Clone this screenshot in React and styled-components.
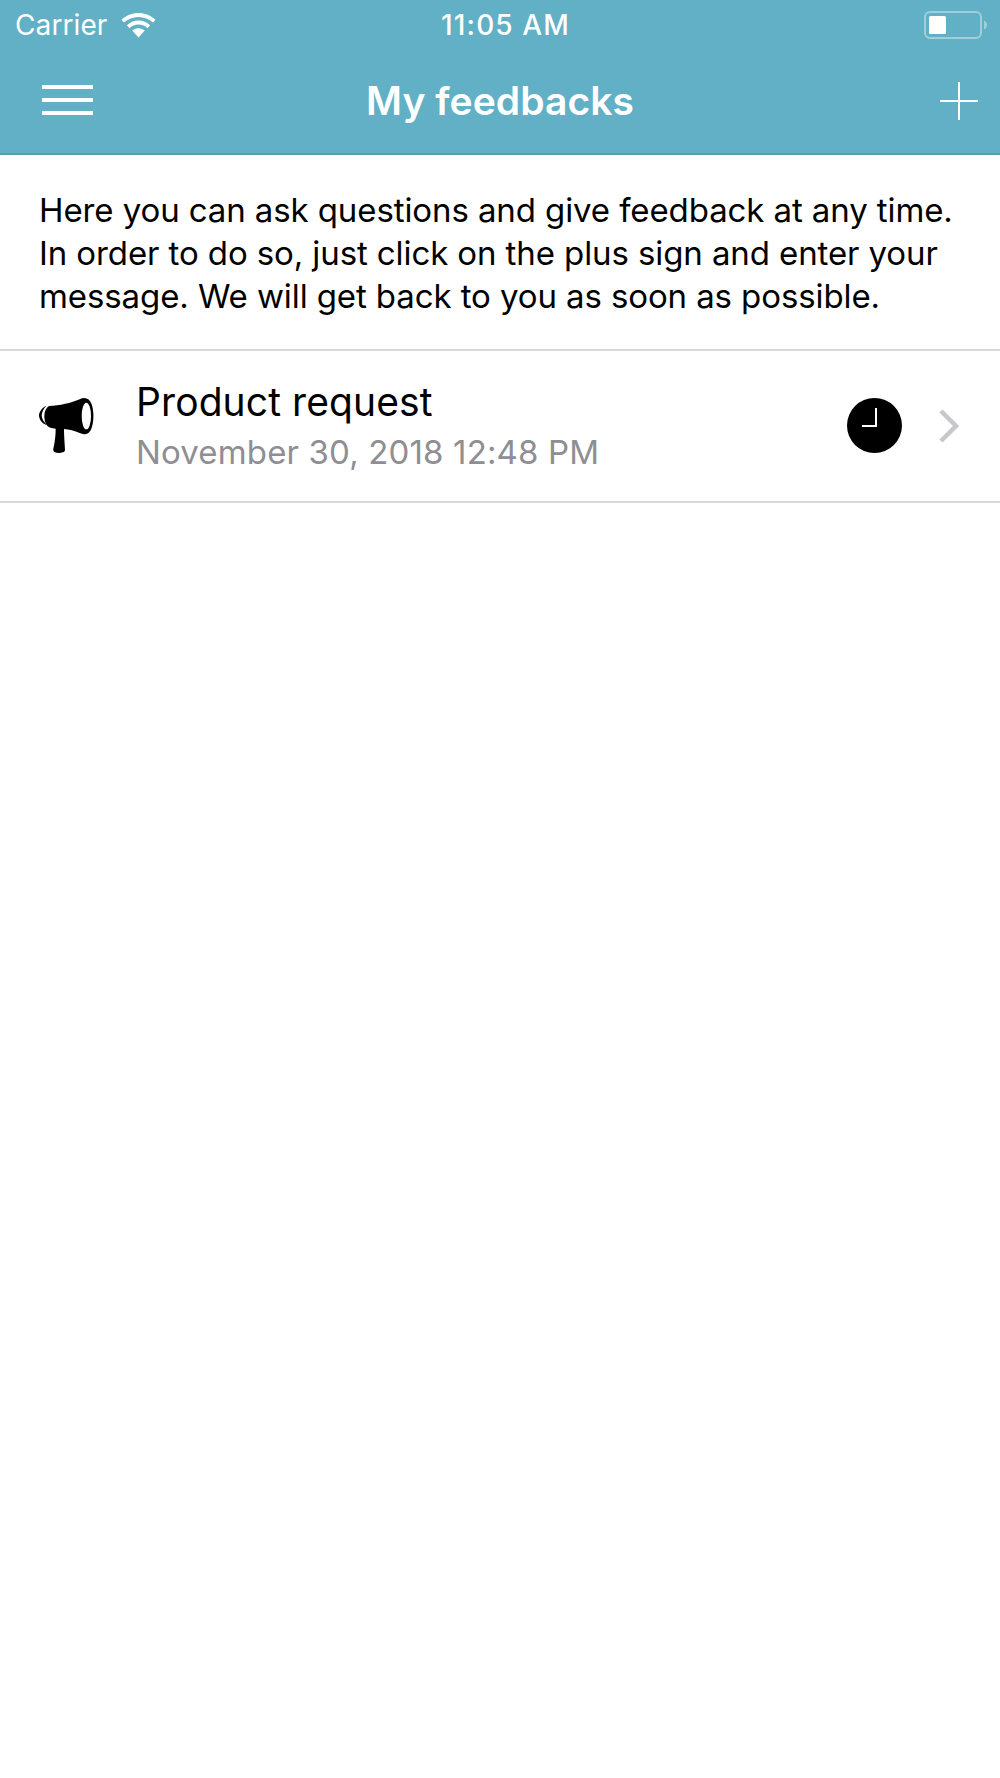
import React from 'react';
import styled, { createGlobalStyle } from 'styled-components';

const GlobalStyle = createGlobalStyle`
  html, body {
    margin: 0;
    padding: 0;
    background: #fff;
  }
  body {
    font-family: Inter, "Liberation Sans", sans-serif;
    -webkit-font-smoothing: antialiased;
  }
`;

const Page = styled.div`
  width: 1000px;
  min-height: 1778px;
  background: #fff;
`;

const Header = styled.header`
  background: #61b0c5;
  border-bottom: 2px solid #5d9bae;
  color: #fff;
`;

const StatusBar = styled.div`
  height: 50px;
  display: grid;
  grid-template-columns: 1fr auto 1fr;
  align-items: center;
  padding: 0 12px 0 15px;
`;

const StatusLeft = styled.div`
  display: flex;
  align-items: center;
  gap: 14px;
  font-size: 28px;
  letter-spacing: 0.1px;
`;

const Clock = styled.div`
  font-size: 28px;
  font-weight: 500;
  letter-spacing: 1.1px;
  margin-left: 8px;
`;

const StatusRight = styled.div`
  display: flex;
  justify-content: flex-end;
`;

const NavBar = styled.div`
  height: 100px;
  display: grid;
  grid-template-columns: 1fr auto 1fr;
  align-items: center;
  padding: 0 22px 3px;
`;

const Title = styled.h1`
  margin: 0;
  font-size: 39px;
  font-weight: 600;
  letter-spacing: 0.05px;
`;

const Burger = styled.div`
  width: 51px;
  margin-left: 20px;
  display: flex;
  flex-direction: column;
  gap: 9px;
`;

const BurgerBar = styled.span`
  display: block;
  height: 4px;
  background: #fff;
`;

const PlusIcon = styled.svg`
  justify-self: end;
  display: block;
  margin-top: 2px;
`;

const Intro = styled.p`
  margin: 0;
  padding: 34px 20px 31px 39px;
  font-size: 33px;
  line-height: 43px;
  letter-spacing: -0.1px;
  color: #000;
  border-bottom: 2px solid #d9d9dc;
`;

const FeedbackRow = styled.div`
  height: 149px;
  display: flex;
  align-items: center;
  padding: 0 41px 1px 39px;
  border-bottom: 2px solid #d9d9dc;
`;

const RowText = styled.div`
  flex: 1;
  margin-left: 42px;
`;

const RowTitle = styled.div`
  font-size: 39px;
  line-height: 46px;
  letter-spacing: 0.1px;
  color: #000;
  margin-top: -1px;
`;

const RowDate = styled.div`
  font-size: 33px;
  line-height: 40px;
  letter-spacing: 0.15px;
  color: #8e8e93;
  margin-top: 7px;
`;

const StatusDot = styled.svg`
  display: block;
  margin-right: 37px;
`;

const Chevron = styled.svg`
  display: block;
`;

const WifiIcon = () => (
  <svg width="35" height="25" viewBox="0 0 35 25" fill="#fff">
    <path d="M17.5 0C11 0 5 2.6 0.5 6.8L3 9.6C6.8 6 11.9 3.9 17.5 3.9S28.2 6 32 9.6L34.5 6.8C30 2.6 24 0 17.5 0Z" />
    <path d="M17.5 7.6C13.1 7.6 9 9.4 5.9 12.3L8.5 15.2C10.9 13 14 11.6 17.5 11.6S24.1 13 26.5 15.2L29.1 12.3C26 9.4 21.9 7.6 17.5 7.6Z" />
    <path d="M17.5 15.2C15 15.2 12.8 16.2 11.2 17.6L17.5 24.6L23.8 17.6C22.2 16.2 20 15.2 17.5 15.2Z" />
  </svg>
);

const BatteryIcon = () => (
  <svg width="64" height="28" viewBox="0 0 64 28">
    <rect x="1" y="1" width="56" height="26" rx="5" fill="none" stroke="#fff" strokeOpacity="0.4" strokeWidth="2" />
    <rect x="5" y="5" width="17" height="18" rx="1.5" fill="#fff" />
    <path d="M60 9.5C62 10.5 63 12 63 14S62 17.5 60 18.5Z" fill="#fff" fillOpacity="0.4" />
  </svg>
);

const MegaphoneIcon = () => (
  <svg width="55" height="57" viewBox="28 18 165 171" style={{ flexShrink: 0 }}>
    <path d="M50 44C36 50 27 65 28 75C30 88 38 98 52 102C42 92 36 82 36 74C36 64 42 52 50 44Z" fill="#000" />
    <path d="M58 45C90 44 125 36 150 25C165 17 180 22 186 40C193 60 193 90 186 110C180 130 165 133 150 126C135 120 118 115 103 114C103 140 106 165 106 178C105 186 85 188 76 184C70 182 70 175 72 168C76 150 78 130 78 113L62 110C50 107 44 92 44 75C44 60 50 50 58 45Z" fill="#000" />
    <ellipse cx="170" cy="75" rx="14" ry="40" fill="#fff" />
  </svg>
);

const App = () => {
  return (
    <Page>
      <GlobalStyle />
      <Header>
        <StatusBar>
          <StatusLeft>
            Carrier
            <WifiIcon />
          </StatusLeft>
          <Clock>11:05 AM</Clock>
          <StatusRight>
            <BatteryIcon />
          </StatusRight>
        </StatusBar>
        <NavBar>
          <Burger>
            <BurgerBar />
            <BurgerBar />
            <BurgerBar />
          </Burger>
          <Title>My feedbacks</Title>
          <PlusIcon width="38" height="38" viewBox="0 0 38 38">
            <path d="M19 0V38M0 19H38" stroke="#fff" strokeWidth="2" fill="none" />
          </PlusIcon>
        </NavBar>
      </Header>
      <Intro>
        Here you can ask questions and give feedback at any time.
        <br />
        In order to do so, just click on the plus sign and enter your
        <br />
        message. We will get back to you as soon as possible.
      </Intro>
      <FeedbackRow>
        <MegaphoneIcon />
        <RowText>
          <RowTitle>Product request</RowTitle>
          <RowDate>November 30, 2018 12:48 PM</RowDate>
        </RowText>
        <StatusDot width="55" height="55" viewBox="0 0 55 55">
          <circle cx="27.5" cy="27.5" r="27.5" fill="#000" />
          <path d="M29 10V28H15" stroke="#fff" strokeWidth="2" fill="none" />
        </StatusDot>
        <Chevron width="20" height="34" viewBox="0 0 20 34">
          <path d="M2 2L17 17L2 32" stroke="#c7c7cc" strokeWidth="4.5" fill="none" />
        </Chevron>
      </FeedbackRow>
    </Page>
  );
};

export default App;
